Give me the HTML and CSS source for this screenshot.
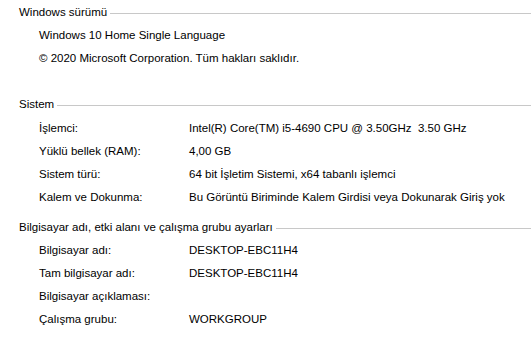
FILE: index.html
```html
<!DOCTYPE html>
<html>
<head>
    <title>Sistem</title>
    <link rel="stylesheet" href="styles.css">
</head>
<body>
    <div class="page">
        <div class="section first">
            <div class="heading">Windows sürümü</div>
            <div class="info">
                <div class="line">Windows 10 Home Single Language</div>
                <div class="line">© 2020 Microsoft Corporation. Tüm hakları saklıdır.</div>
            </div>
        </div>

        <div class="section second">
            <div class="heading">Sistem</div>
            <div class="rows">
                <div class="label">İşlemci:</div>
                <div class="value">Intel(R) Core(TM) i5-4690 CPU @ 3.50GHz  3.50 GHz</div>
                <div class="label">Yüklü bellek (RAM):</div>
                <div class="value">4,00 GB</div>
                <div class="label">Sistem türü:</div>
                <div class="value">64 bit İşletim Sistemi, x64 tabanlı işlemci</div>
                <div class="label">Kalem ve Dokunma:</div>
                <div class="value">Bu Görüntü Biriminde Kalem Girdisi veya Dokunarak Giriş yok</div>
            </div>
        </div>

        <div class="section third">
            <div class="heading">Bilgisayar adı, etki alanı ve çalışma grubu ayarları</div>
            <div class="rows">
                <div class="label">Bilgisayar adı:</div>
                <div class="value">DESKTOP-EBC11H4</div>
                <div class="label">Tam bilgisayar adı:</div>
                <div class="value">DESKTOP-EBC11H4</div>
                <div class="label">Bilgisayar açıklaması:</div>
                <div class="value"></div>
                <div class="label">Çalışma grubu:</div>
                <div class="value">WORKGROUP</div>
            </div>
        </div>
    </div>
</body>
</html>
```

FILE: styles.css
```css
body {
    margin: 0;
    background-color: white;
    color: black;
    font-family: "Liberation Sans", Arial, sans-serif;
    font-size: 11.5px;
    overflow: hidden;
}
.page {
    padding: 1px 0 0 19px;
}
.heading {
    display: flex;
    align-items: center;
    line-height: 23px;
    white-space: nowrap;
}
.heading::after {
    content: "";
    flex: 1;
    height: 1px;
    margin-left: 3px;
    margin-top: 2px;
    background-color: #c8c8c8;
}
.info {
    padding-left: 20px;
}
.line {
    line-height: 23px;
}
.rows {
    display: grid;
    grid-template-columns: 150px 1fr;
    grid-auto-rows: 23px;
    padding-left: 20px;
    line-height: 23px;
}
.value {
    white-space: pre;
}
.second {
    margin-top: 23px;
}
.second .rows {
    padding-top: 1px;
}
.third {
    margin-top: 7px;
}
```
